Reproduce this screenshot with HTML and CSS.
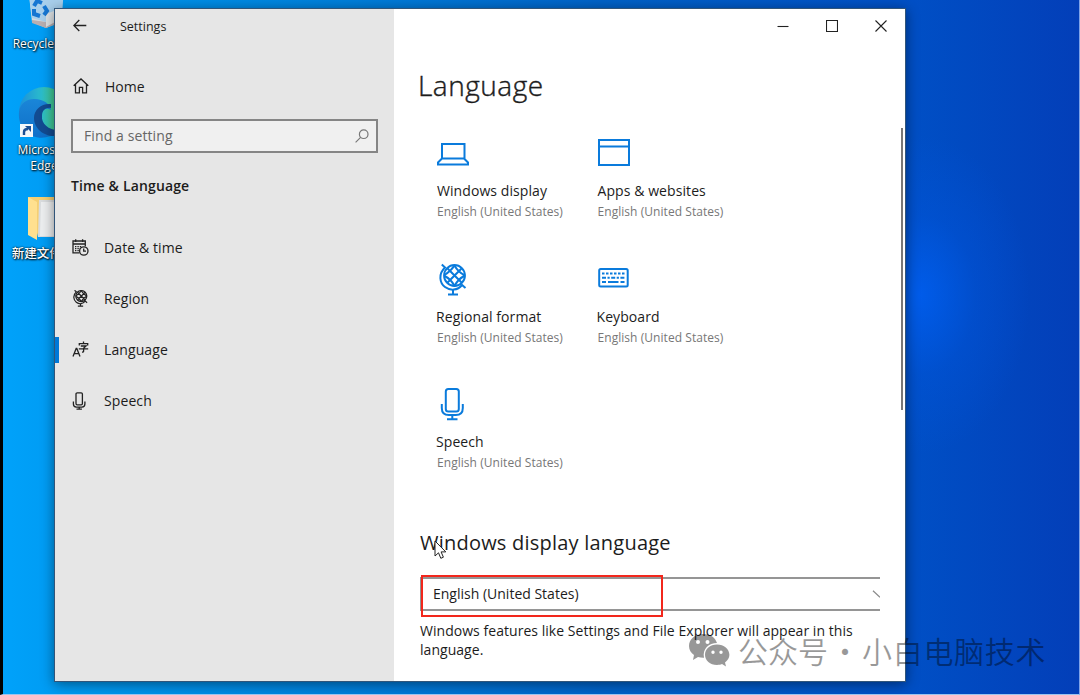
FILE: index.html
```html
<!DOCTYPE html>
<html lang="en">
<head>
    <meta charset="UTF-8">
    <meta name="viewport" content="width=device-width, initial-scale=1.0">
    <title>Settings</title>
    <link rel="stylesheet" href="styles.css">
</head>
<body>
    <div class="desktop">
        <!-- Desktop shortcuts -->
        <div class="shortcut shortcut-bin">
            <svg width="48" height="48" viewBox="0 0 48 48">
                <path d="M6 0h36l-4 36-14 6-14-6z" fill="#d5dadd"/>
                <path d="M10 34l14 2 14-3-.5 4L24 42l-14-5z" fill="#b9aeb0"/>
                <path d="M6 0h36l-2 30-16 6-14-4z" fill="#a8cfec"/>
                <path d="M24 28l16-6-1.500 11L24 41z" fill="#dfe3e5"/>
                <g fill="none" stroke="#1676d2" stroke-width="4">
                    <path d="M12 20l3-5 5 2"/>
                    <path d="M22 20l3 5-3 4"/>
                    <path d="M18 30l-6-2v-5"/>
                </g>
            </svg>
            <span>Recycle Bin</span>
        </div>
        <div class="shortcut shortcut-edge">
            <svg width="52" height="52" viewBox="0 0 52 52">
                <defs>
                    <linearGradient id="edgeTop" x1="0" x2="1" y1="0" y2="0">
                        <stop offset="0" stop-color="#1b8fdc"/>
                        <stop offset=".45" stop-color="#2bbccb"/>
                        <stop offset=".85" stop-color="#4fd16b"/>
                    </linearGradient>
                    <linearGradient id="edgeLow" x1="0" x2="0" y1="0" y2="1">
                        <stop offset="0" stop-color="#1a86d8"/>
                        <stop offset="1" stop-color="#0f6fc8"/>
                    </linearGradient>
                </defs>
                <circle cx="26" cy="26" r="25" fill="url(#edgeTop)"/>
                <path d="M1 26c1-9 8-13 15-13 10 0 16 5 17 11-5-3-10 0-10 6 0 9 8 16 18 16C20 60-1 46 1 26z" fill="url(#edgeLow)"/>
                <path d="M33 18c-9-1-17 5-17 14 0 10 9 18 20 18l9-6c-13 2-22-6-21-14 0-6 4-9 9-8z" fill="#124b91"/>
            </svg>
            <svg class="shortcut-arrow" width="13" height="13" viewBox="0 0 13 13">
                <path d="M0 0h13v13H0z" fill="#f4f7fa"/>
                <path d="M4 11V8q0-3 4-3" fill="none" stroke="#1d4f94" stroke-width="2.4"/>
                <path d="M5 2h6v6z" fill="#1d4f94"/>
            </svg>
            <span>Microsoft Edge</span>
        </div>
        <div class="shortcut shortcut-folder">
            <svg width="48" height="46" viewBox="0 0 48 46">
                <path d="M0 1h46v40H10z" fill="#f5cf73"/>
                <path d="M11 4h36v37H10z" fill="#d9dcde"/>
                <path d="M13 6h34v34H12z" fill="#eceeef"/>
                <path d="M0 1l9 5v38l-9-5z" fill="#ffe08f"/>
            </svg>
            <span>新建文件夹</span>
        </div>

        <div class="window">
            <aside class="sidebar">
                <div class="titlebar">
                    <svg width="14" height="13" viewBox="0 0 14 13" class="line">
                        <path d="M.8 6.5h12.5M6.3 1L.8 6.5l5.5 5.5"/>
                    </svg>
                    <span>Settings</span>
                </div>
                <div class="home">
                    <svg width="16" height="16" viewBox="0 0 16 16" class="line">
                        <path d="M.7 7.7L8 1l7.3 6.7M2.5 6.5v8.3h3.9V9.3h3.2v5.5h3.9V6.5"/>
                    </svg>
                    <span>Home</span>
                </div>
                <div class="search">
                    <span>Find a setting</span>
                    <svg width="14" height="14" viewBox="0 0 14 14">
                        <circle cx="8.7" cy="5.2" r="4.3"/>
                        <path d="M5.6 8.3L.6 13.3"/>
                    </svg>
                </div>
                <h2 class="category">Time &amp; Language</h2>
                <nav class="nav">
                    <div class="nav-item">
                        <svg width="17" height="17" viewBox="0 0 17 17" class="line">
                            <path d="M7.5 13.8H1V2h12.3v5.2M1 5h12.3M3.7.3V3M10.6.3V3"/>
                            <path d="M3 7.7h7M3 9.7h5M3 11.7h4" stroke-dasharray="1.4 1"/>
                            <circle cx="11.8" cy="12" r="4.2"/>
                            <path d="M11.7 9.5v2.7h2.3"/>
                        </svg>
                        <span>Date &amp; time</span>
                    </div>
                    <div class="nav-item">
                        <svg width="17" height="18" viewBox="0 0 32 34" class="line globe-small">
                            <use href="#globe"/>
                        </svg>
                        <span>Region</span>
                    </div>
                    <div class="nav-item active">
                        <svg width="17" height="17" viewBox="0 0 17 17" class="line">
                            <path d="M1 15.5L4.2 7.5h.6l3.2 8M2.2 12.7h4.6"/>
                            <path d="M11.5.5v2M7.3 4.6V2.6h8.4v2M8.8 5h5.2l-2.4 2.2v3q0 1-1.6.9M6.8 7.8h9.4"/>
                        </svg>
                        <span>Language</span>
                    </div>
                    <div class="nav-item">
                        <svg width="14" height="18" viewBox="0 0 14 18" class="line">
                            <rect x="4" y=".8" width="6.4" height="12" rx="1.2"/>
                            <path d="M1.4 9.5v2.6q0 3 3 3h5.5q3 0 3-3V9.5M7.2 15v2.2M4.5 17.2h5.4"/>
                        </svg>
                        <span>Speech</span>
                    </div>
                </nav>
            </aside>

            <main class="content">
                <div class="window-buttons">
                    <svg width="12" height="12" viewBox="0 0 12 12"><path d="M.5 6.5h11"/></svg>
                    <svg width="12" height="12" viewBox="0 0 12 12"><path d="M.5.5h11v11H.5z"/></svg>
                    <svg width="12" height="12" viewBox="0 0 12 12"><path d="M.5.5l11 11M11.5.5l-11 11"/></svg>
                </div>
                <h1>Language</h1>
                <div class="tiles">
                    <div class="tile">
                        <svg width="34" height="32" viewBox="0 0 34 32">
                            <path d="M5 6h22.500v14.500H5zM5 20.500L1 24.500V26.500h30V24.500l-4-4"/>
                        </svg>
                        <h3>Windows display</h3>
                        <p>English (United States)</p>
                    </div>
                    <div class="tile">
                        <svg width="34" height="32" viewBox="0 0 34 32">
                            <path d="M1 2h30v25H1zM1 8.500h30"/>
                        </svg>
                        <h3>Apps &amp; websites</h3>
                        <p>English (United States)</p>
                    </div>
                    <div class="tile shifted">
                        <svg width="32" height="32" viewBox="0 0 32 32">
                            <g id="globe">
                                <circle cx="17.5" cy="11.5" r="10.4"/>
                                <path d="M4.8.5l3.200 3C1 10 2.700 19 8 23c5.500 4 12.500 3.500 17-2l3.500 3"/>
                                <path d="M16 26v4.200M11 30.500h10"/>
                                <path d="M10.300 4.300L24.800 18.800M24.800 4.300L10.300 18.800M7.500 11Q14 7 17.500 1.500M7.500 12Q14 15 17.500 22M17.500 1.500Q21 8 28 11.500M28 11.500Q21 15 17.500 22"/>
                            </g>
                        </svg>
                        <h3>Regional format</h3>
                        <p>English (United States)</p>
                    </div>
                    <div class="tile shifted">
                        <svg width="34" height="32" viewBox="0 0 34 32">
                            <rect x="1.200" y="5" width="28.500" height="17.500" rx="1.500"/>
                            <path d="M4 9.500h22.500" stroke-dasharray="2.500 1.500"/>
                            <path d="M4 13.700h22.500" stroke-dasharray="4 1.500 2.200 1.500"/>
                            <path d="M4 18h4M10 18h10.500M22.500 18h4"/>
                        </svg>
                        <h3>Keyboard</h3>
                        <p>English (United States)</p>
                    </div>
                    <div class="tile shifted">
                        <svg width="32" height="32" viewBox="0 0 32 32">
                            <rect x="8.800" y="0" width="13" height="22.500" rx="2.500"/>
                            <path d="M4.800 15v4q0 7 7 7h7q7 0 7-7v-4M15.300 26v4M10 30.300h10.500"/>
                        </svg>
                        <h3>Speech</h3>
                        <p>English (United States)</p>
                    </div>
                </div>
                <h2 class="section-title">Windows display language</h2>
                <div class="select">
                    <span>English (United States)</span>
                    <svg width="8" height="8" viewBox="0 0 8 8"><path d="M1 .8l7 6.500"/></svg>
                    <div class="highlight"></div>
                </div>
                <p class="description">Windows features like Settings and File Explorer will appear in this language.</p>
            </main>
            <div class="scrollbar"></div>
        </div>

        <svg class="cursor" width="14" height="20" viewBox="0 0 14 20">
            <path d="M1 1v15l3.500-3.200 2.300 5.500 2.600-1.100-2.300-5.300h4.700z"/>
        </svg>

        <div class="watermark">
            <svg width="42" height="36" viewBox="0 0 42 36">
                <path fill-rule="evenodd" d="M15 1C7 1 1 6 1 13c0 4 2 7 5 9l-1 5 5-3c2 .6 4 .9 6 .8C14 16 21 10 29 10 27 4 22 1 15 1zM10 7a2 2 0 1 1 0 4 2 2 0 0 1 0-4zM19.500 7a2 2 0 1 1 0 4 2 2 0 0 1 0-4z"/>
                <path fill-rule="evenodd" d="M29 11.500c-7 0-12 4.500-12 10.300S22 32 29 32c2 0 3.500-.3 5-.9l4 2.500-1-4.200c2.700-2 4.400-4.400 4.400-7.600 0-5.800-5.400-10.300-12.400-10.300zM25 17.500a1.700 1.700 0 1 1 0 3.400 1.700 1.700 0 0 1 0-3.400zM33 17.500a1.700 1.700 0 1 1 0 3.400 1.700 1.700 0 0 1 0-3.400z"/>
            </svg>
            <span class="watermark-label">公众号</span>
            <span class="watermark-dot">·</span>
            <span class="watermark-name">小白电脑技术</span>
        </div>
    </div>
</body>
</html>
```
FILE: styles.css
```css
* {
    box-sizing: border-box;
}
body {
    margin: 0;
    font-family: 'Open Sans', 'Noto Sans', 'Noto Sans CJK SC', sans-serif;
    font-size: 14px;
    color: #1c1c1c;
}
h1, h2, h3, p {
    margin: 0;
    font-weight: normal;
}
svg {
    display: block;
    flex: none;
    fill: none;
}
.desktop {
    position: relative;
    width: 1080px;
    height: 695px;
    overflow: hidden;
    border-left: 3px solid #000;
    border-right: 1px solid #7fa3e8;
    border-bottom: 1px solid #9cc4ee;
    background:
        radial-gradient(ellipse 110px 160px at 917px 295px, rgba(0, 94, 240, 0.85), rgba(0, 86, 225, 0.35) 50%, rgba(0, 80, 210, 0)),
        linear-gradient(90deg, #00a2fa 0, #0098ef 80px, #0080dc 340px, #0062c8 600px, #0050c6 900px, #033eb8 1080px);
}

/* desktop icons */
.shortcut {
    position: absolute;
    width: 76px;
    display: flex;
    flex-direction: column;
    align-items: center;
    color: #fff;
    font-size: 12px;
    font-weight: 500;
    line-height: 16px;
    text-align: center;
    text-shadow: 1px 1px 2px #000, 0 0 2px #000;
}
.shortcut-bin {
    left: 3px;
    top: -14px;
}
.shortcut-bin svg {
    margin-left: 4px;
}
.shortcut-bin span {
    margin-top: 2px;
    white-space: nowrap;
}
.shortcut-edge {
    left: 3px;
    top: 86px;
}
.shortcut-edge span {
    width: 60px;
    margin-top: 4px;
}
.shortcut-arrow {
    position: absolute;
    left: 14px;
    top: 38px;
}
.shortcut-folder {
    left: 2px;
    top: 196px;
}
.shortcut-folder svg {
    margin-left: 18px;
}
.shortcut-folder span {
    margin-top: 4px;
    font-size: 12.5px;
}

/* settings window */
.window {
    position: absolute;
    left: 51px;
    top: 8px;
    width: 852px;
    height: 674px;
    display: flex;
    border: 1px solid #315579;
    background: #fff;
    box-shadow: 0 2px 12px rgba(0, 0, 0, 0.45);
}
.sidebar {
    width: 339px;
    background: #e6e6e6;
}
.line {
    stroke: #222;
    stroke-width: 1.3;
}
.titlebar {
    display: flex;
    align-items: center;
    gap: 33px;
    height: 35px;
    padding-left: 18px;
    font-size: 12.5px;
}
.titlebar svg {
    margin-top: -2px;
}
.home {
    display: flex;
    align-items: center;
    gap: 16px;
    height: 40px;
    margin-top: 22px;
    padding-left: 18px;
}
.search {
    display: flex;
    align-items: center;
    justify-content: space-between;
    width: 307px;
    height: 34px;
    margin: 13px 0 0 16px;
    padding: 0 7px 2px 11px;
    border: 2px solid #858585;
    background: #f0f0f0;
    color: #666;
    letter-spacing: 0.1px;
}
.search svg {
    margin-top: 2px;
    stroke: #777;
    stroke-width: 1.2;
}
.category {
    height: 30px;
    margin: 18px 0 0 16px;
    font-size: 14px;
    font-weight: 600;
    line-height: 30px;
    letter-spacing: 0.15px;
}
.nav {
    margin-top: 21px;
}
.nav-item {
    display: flex;
    align-items: center;
    height: 51px;
    padding-left: 17px;
}
.nav-item span {
    margin-left: auto;
    width: 290px;
    letter-spacing: 0.1px;
}
.nav-item.active {
    background: linear-gradient(#0078d7, #0078d7) left center / 4px 26px no-repeat;
}
.globe-small {
    stroke-width: 2.3;
}
.content {
    flex: 1;
    padding-left: 25px;
}
.window-buttons {
    display: flex;
    justify-content: flex-end;
    gap: 37px;
    padding: 11px 18px 0 0;
}
.window-buttons svg {
    stroke: #222;
    stroke-width: 1.1;
}
h1 {
    height: 40px;
    margin-top: 33px;
    margin-left: -1px;
    margin-bottom: 33px;
    font-size: 28px;
    font-weight: 300;
    line-height: 40px;
    letter-spacing: 0.5px;
    -webkit-text-stroke: 0.4px #1c1c1c;
}
.tiles {
    display: grid;
    grid-template-columns: 160.5px 160.5px;
    grid-auto-rows: 125.5px;
    margin-left: 18px;
}
.tile svg {
    stroke: #0a7bdc;
    stroke-width: 2;
    overflow: visible;
}
.tile h3 {
    height: 22px;
    margin-top: 10px;
    font-size: 14px;
    line-height: 22px;
    letter-spacing: 0.08px;
}
.tile p {
    color: #777;
    font-size: 12px;
    line-height: 20px;
    letter-spacing: 0.05px;
}
.shifted h3 {
    margin-left: -1px;
}
.section-title {
    height: 32px;
    margin-top: 12px;
    margin-left: 1px;
    font-size: 20px;
    line-height: 32px;
    letter-spacing: 0.22px;
}
.select {
    position: relative;
    display: flex;
    align-items: center;
    justify-content: space-between;
    width: 460px;
    height: 34px;
    margin: 18px 0 0 1px;
    padding-left: 11px;
    border: 2px solid #959595;
    border-right: none;
}
.select svg {
    stroke: #888;
    stroke-width: 1.2;
}
.highlight {
    position: absolute;
    left: -1px;
    top: -4px;
    width: 242px;
    height: 42px;
    border: 2px solid #f2271c;
}
.description {
    width: 450px;
    margin: 10px 0 0 1px;
    font-size: 14px;
    line-height: 19px;
    letter-spacing: 0.04px;
}
.scrollbar {
    position: absolute;
    right: 2px;
    top: 119px;
    width: 2px;
    height: 282px;
    background: #777;
}
.cursor {
    position: absolute;
    left: 431px;
    top: 540px;
    fill: #fff;
    stroke: #222;
    stroke-width: 1;
}
.watermark {
    position: absolute;
    left: 685px;
    top: 630px;
    display: flex;
    align-items: center;
    opacity: 0.4;
    color: #000;
    font-family: 'Noto Sans CJK SC', sans-serif;
    font-size: 30px;
    font-weight: 350;
    line-height: 40px;
}
.watermark svg {
    margin-top: 1px;
    fill: #000;
}
.watermark-label {
    margin-left: 8px;
}
.watermark-dot {
    width: 34px;
    text-align: center;
}
.watermark-name {
    letter-spacing: 0.7px;
}
```
